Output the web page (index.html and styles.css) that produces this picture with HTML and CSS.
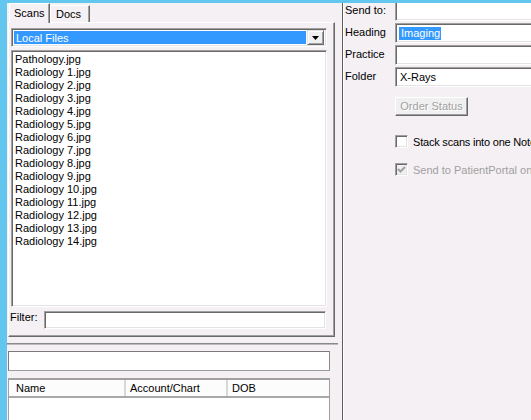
FILE: index.html
```html
<!DOCTYPE html>
<html>
<head>
<meta charset="utf-8">
<link rel="stylesheet" href="styles.css">
</head>
<body>
<div class="app">
  <div class="left">
    <div class="tabs">
      <div class="tab active">Scans</div>
      <div class="tab">Docs</div>
    </div>
    <div class="tabpanel">
      <div class="combo">
        <div class="combo-field">Local Files</div>
        <div class="combo-btn"><svg width="7" height="4" viewBox="0 0 7 4"><path d="M0 0H7L3.5 4Z" fill="#000"/></svg></div>
      </div>
      <div class="listbox">
        <div class="item">Pathology.jpg</div>
        <div class="item">Radiology 1.jpg</div>
        <div class="item">Radiology 2.jpg</div>
        <div class="item">Radiology 3.jpg</div>
        <div class="item">Radiology 4.jpg</div>
        <div class="item">Radiology 5.jpg</div>
        <div class="item">Radiology 6.jpg</div>
        <div class="item">Radiology 7.jpg</div>
        <div class="item">Radiology 8.jpg</div>
        <div class="item">Radiology 9.jpg</div>
        <div class="item">Radiology 10.jpg</div>
        <div class="item">Radiology 11.jpg</div>
        <div class="item">Radiology 12.jpg</div>
        <div class="item">Radiology 13.jpg</div>
        <div class="item">Radiology 14.jpg</div>
      </div>
      <div class="filter-row">
        <span class="filter-label">Filter:</span>
        <div class="sunken filter-input"></div>
      </div>
    </div>
    <div class="lower">
      <div class="flat-input"></div>
      <div class="listview">
        <div class="lv-header">
          <div class="lv-col c1">Name</div>
          <div class="lv-col c2">Account/Chart</div>
          <div class="lv-col c3">DOB</div>
        </div>
      </div>
    </div>
  </div>
  <div class="right">
    <div class="form">
      <div class="row"><span class="lbl">Send to:</span><div class="sunken field"></div></div>
      <div class="row"><span class="lbl">Heading</span><div class="sunken field"><span class="sel">Imaging</span></div></div>
      <div class="row"><span class="lbl">Practice</span><div class="sunken field"></div></div>
      <div class="row"><span class="lbl">Folder</span><div class="sunken field"><span class="val">X-Rays</span></div></div>
    </div>
    <div class="btn-row"><div class="button disabled">Order Status</div></div>
    <div class="check-row"><span class="checkbox"></span><span class="ctext tight">Stack scans into one Note</span></div>
    <div class="check-row dis"><span class="checkbox checked"><svg width="9" height="9" viewBox="0 0 9 9"><path d="M1 4L3.5 6.5L8 2" fill="none" stroke="#a0a0a0" stroke-width="2"/></svg></span><span class="ctext">Send to PatientPortal on</span></div>
  </div>
</div>
</body>
</html>
```

FILE: styles.css
```css
html, body {
  margin: 0;
  padding: 0;
}
body {
  width: 531px;
  height: 420px;
  overflow: hidden;
  background: #62c6ee;
  font-family: "Liberation Sans", Arial, sans-serif;
  font-size: 11px;
  color: #000;
}
.app {
  display: flex;
  margin: 3px 0 0 7px;
  height: 417px;
  background: #f4f0f4;
  overflow: hidden;
}
.left {
  width: 335px;
  flex: none;
  display: flex;
  flex-direction: column;
  overflow: hidden;
}
.tabs {
  display: flex;
  flex: none;
  height: 19px;
  padding-left: 2px;
  position: relative;
  z-index: 1;
}
.tab {
  box-sizing: border-box;
  height: 17px;
  margin-top: 2px;
  width: 40px;
  border-top: 1px solid #fff;
  border-left: 1px solid #fff;
  border-right: 1px solid #696969;
  box-shadow: inset -1px 0 #a0a0a0;
  padding: 2px 0 0 5px;
  background: #f4f0f4;
}
.tab.active {
  width: 41px;
  height: 20px;
  margin-top: 0;
  padding: 3px 0 0 4px;
}
.tabpanel {
  flex: none;
  box-sizing: border-box;
  margin-left: 1px;
  width: 327px;
  height: 315px;
  border-top: 1px solid #fff;
  border-left: 1px solid #fff;
  border-right: 1px solid #696969;
  border-bottom: 1px solid #696969;
  box-shadow: inset -1px -1px #a0a0a0;
  padding: 5px 0 0 2px;
}
.sunken {
  box-sizing: border-box;
  background: #fff;
  border-top: 1px solid #a0a0a0;
  border-left: 1px solid #a0a0a0;
  border-right: 1px solid #fff;
  border-bottom: 1px solid #fff;
  box-shadow: inset 1px 1px #696969, inset -1px -1px #e3e3e3;
}
.combo {
  box-sizing: border-box;
  width: 316px;
  height: 19px;
  display: flex;
  padding: 2px;
  background: #fff;
  border-top: 1px solid #a0a0a0;
  border-left: 1px solid #a0a0a0;
  border-right: 1px solid #fff;
  border-bottom: 1px solid #fff;
  box-shadow: inset 1px 1px #696969, inset -1px -1px #e3e3e3;
}
.combo-field {
  flex: 1;
  background: #3399ff;
  color: #fff;
  line-height: 14px;
  padding-left: 2px;
  margin: 0 1px 0 0;
}
.combo-btn {
  box-sizing: border-box;
  width: 17px;
  margin: -1px 0;
  background: #f0f0f0;
  border-top: 1px solid #e3e3e3;
  border-left: 1px solid #e3e3e3;
  border-right: 1px solid #696969;
  border-bottom: 1px solid #696969;
  box-shadow: inset 1px 1px #fff, inset -1px -1px #a0a0a0;
  display: flex;
  align-items: center;
  justify-content: center;
}
.listbox {
  box-sizing: border-box;
  margin-top: 3px;
  width: 316px;
  height: 257px;
  padding: 2px 0 0 3px;
  background: #fff;
  border-top: 1px solid #a0a0a0;
  border-left: 1px solid #a0a0a0;
  border-right: 1px solid #fff;
  border-bottom: 1px solid #fff;
  box-shadow: inset 1px 1px #696969, inset -1px -1px #e3e3e3;
}
.item {
  height: 13px;
  line-height: 13px;
}
.filter-row {
  display: flex;
  align-items: center;
  margin: 4px 0 0 -1px;
  height: 18px;
}
.filter-label {
  width: 34px;
  margin-top: -6px;
}
.filter-input {
  width: 282px;
  height: 18px;
}
.lower {
  flex: none;
  margin-top: 6px;
  border-top: 1px solid #8a8a8a;
  box-shadow: inset 0 1px #bdbabd;
  width: 330px;
  height: 80px;
  padding: 7px 0 0 1px;
}
.flat-input {
  box-sizing: border-box;
  width: 322px;
  height: 20px;
  background: #fff;
  border: 1px solid #7a7a7a;
  border-right-color: #8a8a8a;
  border-bottom-color: #9a9a9a;
}
.listview {
  box-sizing: border-box;
  margin-top: 7px;
  width: 322px;
  height: 60px;
  background: #fff;
  border-top: 2px solid #a0a0a0;
  border-left: 1px solid #a0a0a0;
  border-right: 1px solid #a0a0a0;
}
.lv-header {
  display: flex;
  height: 16px;
  border-bottom: 2px solid #a8a8a8;
  background: #fcfcfc;
}
.lv-col {
  box-sizing: border-box;
  padding: 2px 0 0 7px;
  border-right: 2px solid #d8d8d8;
  line-height: 13px;
}
.c1 { width: 117px; }
.c2 { width: 102px; padding-left: 4px; }
.c3 { flex: 1; padding-left: 4px; border-right: 0; }

.right {
  flex: 1;
  border-left: 1px solid #5e5e5e;
  box-shadow: inset 1px 0 #fff;
  padding-left: 1px;
  overflow: hidden;
}
.form {
  margin-top: -2px;
  display: flex;
  flex-direction: column;
  gap: 2px;
}
.row {
  display: flex;
  height: 20px;
}
.lbl {
  width: 51px;
  padding: 3px 0 0 1px;
  box-sizing: border-box;
  line-height: 13px;
}
.field {
  flex: 1;
  height: 20px;
  padding: 3px 0 0 3px;
  margin-right: -10px;
}
.sel {
  display: inline-block;
  background: #3399ff;
  color: #fff;
  line-height: 13px;
  padding: 0 1px 0 2px;
}
.val {
  display: inline-block;
  line-height: 13px;
  padding-left: 1px;
}
.btn-row {
  padding: 10px 0 0 51px;
}
.button {
  box-sizing: border-box;
  width: 73px;
  height: 19px;
  background: #f0f0f0;
  border-top: 1px solid #fff;
  border-left: 1px solid #fff;
  border-right: 1px solid #696969;
  border-bottom: 1px solid #696969;
  box-shadow: inset -1px -1px #a0a0a0;
  text-align: center;
  line-height: 17px;
}
.button.disabled {
  color: #a0a0a0;
  text-shadow: 1px 1px #fff;
}
.check-row {
  display: flex;
  align-items: center;
  padding-left: 51px;
  margin-top: 19px;
  height: 13px;
  white-space: nowrap;
}
.check-row + .check-row {
  margin-top: 15px;
}
.checkbox {
  box-sizing: border-box;
  width: 13px;
  height: 13px;
  flex: none;
  background: #fff;
  border-top: 1px solid #a0a0a0;
  border-left: 1px solid #a0a0a0;
  border-right: 1px solid #fff;
  border-bottom: 1px solid #fff;
  box-shadow: inset 1px 1px #696969, inset -1px -1px #e3e3e3;
  display: flex;
  align-items: center;
  justify-content: center;
}
.checkbox.checked {
  background: #f0f0f0;
}
.ctext {
  margin-left: 5px;
}
.ctext.tight {
  letter-spacing: -0.2px;
}
.check-row.dis .ctext {
  color: #a0a0a0;
}
```
